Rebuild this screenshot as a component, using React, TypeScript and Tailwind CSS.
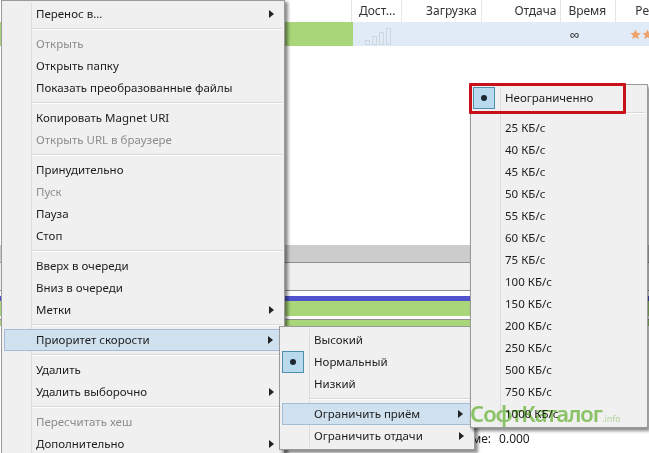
type Item =
  | { sep: true }
  | {
      sep?: false;
      label: string;
      disabled?: boolean;
      arrow?: boolean;
      active?: boolean;
      checked?: boolean;
    };

const mainItems: Item[] = [
  { label: "Перенос в...", arrow: true },
  { sep: true },
  { label: "Открыть", disabled: true },
  { label: "Открыть папку" },
  { label: "Показать преобразованные файлы" },
  { sep: true },
  { label: "Копировать Magnet URI" },
  { label: "Открыть URL в браузере", disabled: true },
  { sep: true },
  { label: "Принудительно" },
  { label: "Пуск", disabled: true },
  { label: "Пауза" },
  { label: "Стоп" },
  { sep: true },
  { label: "Вверх в очереди" },
  { label: "Вниз в очереди" },
  { label: "Метки", arrow: true },
  { sep: true },
  { label: "Приоритет скорости", arrow: true, active: true },
  { sep: true },
  { label: "Удалить" },
  { label: "Удалить выборочно", arrow: true },
  { sep: true },
  { label: "Пересчитать хеш", disabled: true },
  { label: "Дополнительно", arrow: true },
];

const priorityItems: Item[] = [
  { label: "Высокий" },
  { label: "Нормальный", checked: true },
  { label: "Низкий" },
  { sep: true },
  { label: "Ограничить приём", arrow: true, active: true },
  { label: "Ограничить отдачи", arrow: true },
];

const speeds = [25, 40, 45, 50, 55, 60, 75, 100, 150, 200, 250, 500, 750, 1000];
const speedItems: Item[] = [
  { label: "Неограниченно", checked: true },
  { sep: true },
  ...speeds.map((s) => ({ label: `${s} КБ/с` })),
];

const MenuRows = ({ items }: { items: Item[] }) => (
  <>
    {items.map((item, i) => {
      if (item.sep) {
        return (
          <div key={i} className="flex h-[8px]">
            <div className="w-[28px] border-r border-[#dcdcdc]" />
            <div className="flex-1 pt-[3px]">
              <div className="h-[2px] border-t border-[#d7d7d7] bg-white" />
            </div>
          </div>
        );
      }
      return (
        <div
          key={i}
          className={`flex h-[22px] items-center ${
            item.active ? "border border-[#a3bdd6] bg-[#cfe0ef]" : ""
          }`}
        >
          <div
            className={`h-full shrink-0 ${
              item.active ? "w-[27px]" : "w-[28px] border-r border-[#dcdcdc]"
            }`}
          >
            {item.checked && (
              <div className="flex h-[22px] w-[22px] items-center justify-center border border-[#4f8fae] bg-[#b9d9ec]">
                <div className="h-[6px] w-[6px] rounded-full bg-[#1c2530]" />
              </div>
            )}
          </div>
          <span
            className={`ml-[4px] flex-1 whitespace-nowrap ${
              item.disabled ? "text-[#8c8c8c]" : "text-[#1c1c1c]"
            }`}
          >
            {item.label}
          </span>
          {item.arrow && (
            <svg width="5" height="8" viewBox="0 0 5 8" className="mr-[8px] shrink-0">
              <path d="M0 0 L5 4 L0 8 Z" fill="#222222" />
            </svg>
          )}
        </div>
      );
    })}
  </>
);

const Star = () => (
  <svg width="11" height="11" viewBox="0 0 24 24" className="shrink-0">
    <path
      d="M12 1l3.4 7.3 7.9 1-5.8 5.5 1.5 7.9L12 18l-7 3.700 1.500-7.900L.7 9.300l7.900-1z"
      fill="#eea36c"
    />
  </svg>
);

const App = () => {
  return (
    <div
      className="relative h-[453px] w-[649px] overflow-hidden bg-white text-[11.5px] leading-none text-[#222222]"
      style={{ fontFamily: '"Noto Sans", sans-serif' }}
    >
      {/* torrent list behind the menus */}
      <div className="flex h-[22px] items-center text-[12px] text-[#333333]">
        <div className="h-full w-[353px] border-r border-[#e6e6e6]" />
        <div className="flex h-full w-[50px] items-center border-r border-[#e6e6e6] pl-[7px]">Дост...</div>
        <div className="flex h-full w-[80px] items-center justify-end border-r border-[#e6e6e6] pr-[4px]">Загрузка</div>
        <div className="flex h-full w-[80px] items-center justify-end border-r border-[#e6e6e6] pr-[4px]">Отдача</div>
        <div className="flex h-full w-[55px] items-center border-r border-[#e6e6e6] pl-[7px]">Время</div>
        <div className="flex h-full flex-1 items-center whitespace-nowrap pl-[19px]">Ре</div>
      </div>
      <div className="flex h-[24px] items-center">
        <div className="h-full w-[353px] bg-[#a9d678]" />
        <div className="flex h-full flex-1 items-center overflow-hidden bg-[#e1ebf7]">
          <svg width="27" height="24" viewBox="0 0 27 24" className="ml-[12px] shrink-0">
            <g fill="none" stroke="#d0d6dd" strokeWidth="1">
              <rect x="0.5" y="18.500" width="4" height="4" />
              <rect x="7.500" y="14.500" width="4" height="8" />
              <rect x="14.500" y="10.500" width="4" height="12" />
              <rect x="21.500" y="6.500" width="4" height="16" />
            </g>
          </svg>
          <span className="ml-[178px] text-[13px]">∞</span>
          <div className="ml-[51px] flex gap-[1px]">
            <Star />
            <Star />
          </div>
        </div>
      </div>
      <div className="h-[199px]" />
      <div className="h-[17px] bg-[#cccccc]" />
      <div className="h-[29px] border-y border-[#8f8f8f] bg-[#f0f0f0]" />
      <div className="h-[5px] bg-white" />
      <div className="h-[5px] bg-[#5252cf]" />
      <div className="h-[15px] bg-[#a9d678]" />
      <div className="h-[3px] bg-white" />
      <div className="h-[1px] bg-[#8f8f8f]" />
      <div className="h-[6px] bg-[#a9d678]" />
      <div className="flex h-[127px] items-end justify-start pb-[8px] pl-[472px] text-[12px]">
        <span className="mr-[8px]">ме:</span>
        <span>0.000</span>
      </div>

      {/* main context menu */}
      <div className="absolute left-[1px] top-0 w-[284px] border border-[#9a9a9a] bg-[#f0f0f0] px-[2px] pt-[2px] shadow-[3px_2px_3px_rgba(0,0,0,0.45)]">
        <MenuRows items={mainItems} />
      </div>

      {/* speed priority submenu */}
      <div className="absolute left-[279px] top-[326px] w-[196px] border border-[#9a9a9a] bg-[#f0f0f0] p-[2px] shadow-[3px_3px_3px_rgba(0,0,0,0.45)]">
        <MenuRows items={priorityItems} />
      </div>

      {/* limit list submenu */}
      <div className="absolute left-[470px] top-[84px] w-[178px] border border-[#9a9a9a] bg-[#f0f0f0] p-[2px] shadow-[2px_3px_3px_rgba(0,0,0,0.45)]">
        <MenuRows items={speedItems} />
      </div>

      {/* red annotation */}
      <div className="absolute left-[469px] top-[83px] h-[31px] w-[157px] rounded-[1px] border-[3px] border-[#c8101a]" />

      {/* watermark, multiply keeps the menu text dark underneath */}
      <div className="absolute left-[470px] top-[400px] flex items-baseline text-[#93cf6c] mix-blend-multiply">
        <span className="text-[22px] font-semibold leading-[26px] tracking-[-1px]">СофтКаталог</span>
        <span className="text-[9px] text-[#c2e2ab]">.info</span>
      </div>
    </div>
  );
};

export default App;
